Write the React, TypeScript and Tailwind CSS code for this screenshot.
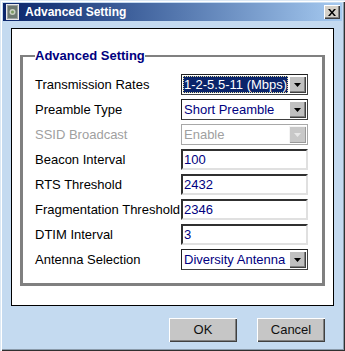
import React from 'react';

const font = "font-['Liberation_Sans',Arial,sans-serif]";

const Arrow = ({ disabled = false }: { disabled?: boolean }) => (
    <div
        className={`flex h-full w-[17px] shrink-0 items-center justify-center ${
            disabled
                ? 'bg-[#c8c8c8] shadow-[inset_1px_1px_0_#f4f4f4,inset_-1px_-1px_0_#9a9a9a]'
                : 'bg-[#c0c0c0] shadow-[inset_1px_1px_0_#ffffff,inset_-1px_-1px_0_#404040,inset_-2px_-2px_0_#808080]'
        }`}
    >
        <svg width="7" height="4" viewBox="0 0 7 4">
            <path d="M0 0h7L3.5 4z" fill={disabled ? '#e8e8e8' : '#000000'} />
        </svg>
    </div>
);

const Select = ({ value, selected = false, disabled = false }: { value: string; selected?: boolean; disabled?: boolean }) => (
    <div
        className={`flex h-[21px] w-[127px] border bg-white p-px ${
            disabled ? 'border-[#a8a8a8]' : 'border-t-[#202020] border-l-[#202020] border-r-[#404040] border-b-[#404040]'
        }`}
    >
        <div className="flex min-w-0 flex-1 items-center pr-[1px]">
            <span
                className={`flex h-full w-full items-center whitespace-nowrap px-[1px] leading-none ${
                    selected
                        ? 'bg-[#0a246a] text-white outline outline-1 outline-dotted outline-[#e8e0a0] -outline-offset-1'
                        : disabled
                        ? 'text-[#a0a0a0]'
                        : 'text-[#000080]'
                }`}
            >
                {value}
            </span>
        </div>
        <Arrow disabled={disabled} />
    </div>
);

const Input = ({ value }: { value: string }) => (
    <div className="flex h-[21px] w-[127px] items-center border-2 border-t-[#303030] border-l-[#303030] border-r-[#e0e0e0] border-b-[#e0e0e0] bg-white px-[1px] leading-none text-[#000080]">
        {value}
    </div>
);

const rows: { label: string; control: React.ReactNode; disabled?: boolean }[] = [
    { label: 'Transmission Rates', control: <Select value="1-2-5.5-11 (Mbps)" selected /> },
    { label: 'Preamble Type', control: <Select value="Short Preamble" /> },
    { label: 'SSID Broadcast', control: <Select value="Enable" disabled />, disabled: true },
    { label: 'Beacon Interval', control: <Input value="100" /> },
    { label: 'RTS Threshold', control: <Input value="2432" /> },
    { label: 'Fragmentation Threshold', control: <Input value="2346" /> },
    { label: 'DTIM Interval', control: <Input value="3" /> },
    { label: 'Antenna Selection', control: <Select value="Diversity Antenna" /> },
];

const Button = ({ children }: { children: React.ReactNode }) => (
    <button className="flex h-[24px] w-[68px] items-center justify-center bg-[#c6c6c6] text-[13px] text-[#101010] shadow-[inset_1px_1px_0_#ffffff,inset_-1px_-1px_0_#404040,inset_-2px_-2px_0_#808080]">
        {children}
    </button>
);

export default function App() {
    return (
        <div
            className={`${font} flex h-[351px] w-[345px] flex-col bg-[#c4daf0] p-[3px] shadow-[inset_1px_1px_0_#dce8f4,inset_2px_2px_0_#ffffff,inset_-1px_-1px_0_#303030,inset_-2px_-2px_0_#8a9aaa]`}
        >
            {/* title bar */}
            <div className="flex h-[18px] items-center bg-linear-to-r from-[#0a246a] to-[#a6caf0] pl-[2px] pr-[2px]">
                <svg width="16" height="16" viewBox="0 0 16 16">
                    <rect x="1.5" y="0.5" width="12" height="15" fill="#9aa0a0" stroke="#e8e8e8" />
                    <rect x="3" y="2" width="9" height="12" fill="#6c7870" />
                    <circle cx="7.5" cy="8" r="3" fill="#c8d0c0" />
                    <circle cx="7.5" cy="8" r="1.5" fill="#7a9a60" />
                </svg>
                <span className="ml-[4px] text-[12px] font-bold leading-none text-white">Advanced Setting</span>
                <div className="ml-auto flex h-[14px] w-[16px] items-center justify-center bg-[#d4d0c8] shadow-[inset_1px_1px_0_#ffffff,inset_-1px_-1px_0_#404040,inset_-2px_-2px_0_#808080]">
                    <svg width="8" height="7" viewBox="0 0 8 7">
                        <path d="M0 0h2l2 2.5L6 0h2L5 3.5 8 7H6L4 4.5 2 7H0l3-3.5z" fill="#000" />
                    </svg>
                </div>
            </div>

            {/* white panel */}
            <div className="ml-[8px] mt-[7px] h-[278px] w-[323px] border border-[#000000] bg-white">
                <fieldset className="ml-[8px] mt-[19px] w-[305px] border-[3px] border-t-2 border-[#808080] pb-[13px] pl-[12px] pr-[14px] pt-[11px]">
                    <legend className="px-0 text-[13px] font-bold leading-[15px] text-[#000080]">Advanced Setting</legend>
                    <div className="flex flex-col gap-[4px] text-[13px]">
                        {rows.map((r) => (
                            <div key={r.label} className="flex h-[21px] items-center">
                                <span className={`w-[146px] whitespace-nowrap ${r.disabled ? 'text-[#a0a0a0]' : 'text-black'}`}>
                                    {r.label}
                                </span>
                                {r.control}
                            </div>
                        ))}
                    </div>
                </fieldset>
            </div>

            {/* buttons */}
            <div className="mt-[12px] flex justify-end gap-[20px] pr-[17px]">
                <Button>OK</Button>
                <Button>Cancel</Button>
            </div>
        </div>
    );
}
